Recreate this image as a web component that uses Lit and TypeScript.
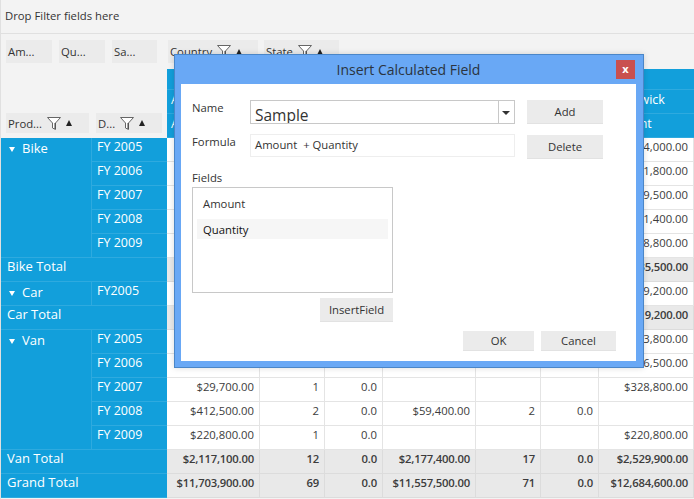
import { LitElement, html, css, svg } from 'lit'
import { customElement } from 'lit/decorators.js'

type Row = { kind: 'row' | 'total'; a?: string; span?: number; b?: string; vals: string[] }

const empty = ['', '', '', '', '', '']
const rows: Row[] = [
  { kind: 'row', a: 'Bike', span: 5, b: 'FY 2005', vals: [...empty, '$654,000.00'] },
  { kind: 'row', b: 'FY 2006', vals: [...empty, '$741,800.00'] },
  { kind: 'row', b: 'FY 2007', vals: [...empty, '$839,500.00'] },
  { kind: 'row', b: 'FY 2008', vals: [...empty, '$941,400.00'] },
  { kind: 'row', b: 'FY 2009', vals: [...empty, '$858,800.00'] },
  { kind: 'total', a: 'Bike Total', vals: [...empty, '$4,335,500.00'] },
  { kind: 'row', a: 'Car', span: 1, b: 'FY2005', vals: [...empty, '$5,819,200.00'] },
  { kind: 'total', a: 'Car Total', vals: [...empty, '$5,819,200.00'] },
  { kind: 'row', a: 'Van', span: 5, b: 'FY 2005', vals: [...empty, '$1,023,800.00'] },
  { kind: 'row', b: 'FY 2006', vals: [...empty, '$956,500.00'] },
  { kind: 'row', b: 'FY 2007', vals: ['$29,700.00', '1', '0.0', '', '', '', '$328,800.00'] },
  { kind: 'row', b: 'FY 2008', vals: ['$412,500.00', '2', '0.0', '$59,400.00', '2', '0.0', ''] },
  { kind: 'row', b: 'FY 2009', vals: ['$220,800.00', '1', '0.0', '', '', '', '$220,800.00'] },
  { kind: 'total', a: 'Van Total', vals: ['$2,117,100.00', '12', '0.0', '$2,177,400.00', '17', '0.0', '$2,529,900.00'] },
  { kind: 'total', a: 'Grand Total', vals: ['$11,703,900.00', '69', '0.0', '$11,557,500.00', '71', '0.0', '$12,684,600.00'] },
]

const filterIcon = svg`<svg class="ficon" width="14" height="13" viewBox="0 0 14 13"><path d="M.5.5h13L8.5 6v6.5L5.5 11V6z" fill="#fff" stroke="#666" stroke-width="1"/><path d="M8 6v6" stroke="#444"/></svg>`

@customElement('app-root')
export class AppRoot extends LitElement {
  static styles = css`
    :host {
      display: block;
      position: relative;
      width: 694px;
      height: 499px;
      overflow: hidden;
      box-sizing: border-box;
      background: #f3f3f3;
      border-left: 1px solid #e0e0e0;
      font-family: 'Open Sans', 'Noto Sans', sans-serif;
      font-size: 11.3px;
      color: #333;
    }
    .filter-bar {
      height: 34px;
      box-sizing: border-box;
      padding: 8px 0 0 4px;
      border-bottom: 1px solid #e0e0e0;
    }
    .chip-row {
      display: flex;
      height: 35px;
      padding: 6px 0 0 5px;
      box-sizing: border-box;
    }
    .chip {
      display: flex;
      align-items: center;
      height: 23px;
      box-sizing: border-box;
      padding-left: 2px;
      background: #ebebeb;
      white-space: nowrap;
    }
    .chip.short { height: 20px; }
    .ficon { margin-left: 5px; flex: none; }
    .tri {
      width: 0;
      height: 0;
      margin-left: 5px;
      border-left: 3.5px solid transparent;
      border-right: 3.5px solid transparent;
      border-bottom: 6px solid #222;
    }
    .pivot {
      display: grid;
      grid-template-columns: 91px 75px 93px 65px 58px 93px 65px 58px 95px;
    }
    .corner {
      grid-column: 1 / 3;
      height: 69px;
      box-sizing: border-box;
      display: flex;
      align-items: flex-end;
      padding: 0 0 5px 5px;
    }
    .col-head {
      grid-column: 3 / 10;
      height: 69px;
      background: #129fdb;
      color: #fff;
      display: grid;
      grid-template-rows: 21px 24px 24px;
      font-size: 12.5px;
    }
    .col-head > div {
      display: flex;
      border-bottom: 1px solid #2eaadf;
      line-height: 20px;
      white-space: nowrap;
    }
    .hc1 { width: 432px; padding-left: 4px; box-sizing: border-box; }
    .hc2 { padding-left: 6px; }
    .cell {
      height: 24px;
      box-sizing: border-box;
      padding: 0 5px;
      line-height: 17px;
      white-space: nowrap;
    }
    .head {
      background: #129fdb;
      color: #fff;
      border-bottom: 1px solid #2eaadf;
      border-right: 1px solid #2eaadf;
    }
    .head.span {
      grid-column: 1 / 3;
      border-right: 0;
      padding-left: 6px;
      font-size: 13px;
    }
    .head.group {
      height: auto;
      display: flex;
      align-items: flex-start;
      padding: 2px 0 0 8px;
      font-size: 13px;
    }
    .arrow {
      width: 0;
      height: 0;
      margin: 7px 7px 0 0;
      border-left: 3px solid transparent;
      border-right: 3px solid transparent;
      border-top: 5px solid #fff;
    }
    .head.year {
      border-right: 0;
      padding-left: 5px;
      font-size: 12.5px;
      line-height: 18px;
    }
    .val {
      text-align: right;
      background: #fff;
      border-bottom: 1px solid #e4e4e4;
      border-right: 1px solid #e4e4e4;
      color: #3c3c3c;
    }
    .val.total {
      background: #e9e9e9;
      font-weight: 600;
      letter-spacing: -0.2px;
      border-color: #dcdcdc;
    }
    .dialog {
      position: absolute;
      left: 173px;
      top: 54px;
      width: 470px;
      height: 314px;
      box-sizing: border-box;
      background: #69a8f5;
      border: 1px solid #4a86c8;
      box-shadow: 0 0 6px rgba(0, 0, 0, 0.15);
      display: flex;
      flex-direction: column;
      padding: 0 7px 6px 6px;
    }
    .title-bar {
      height: 29px;
      position: relative;
      flex: none;
    }
    .title {
      text-align: center;
      font-size: 14px;
      line-height: 30px;
      color: #2b3440;
    }
    .close {
      position: absolute;
      right: 1px;
      top: 5px;
      width: 19px;
      height: 19px;
      background: #c9504f;
      color: #fff;
      font-weight: 700;
      font-size: 11px;
      line-height: 17px;
      text-align: center;
    }
    .body {
      flex: 1;
      background: #fff;
      padding: 16px 20px 0 11px;
      display: flex;
      flex-direction: column;
      min-height: 0;
    }
    .form-row { display: flex; }
    .label { width: 58px; flex: none; }
    .combo {
      width: 265px;
      height: 24px;
      box-sizing: border-box;
      border: 1px solid #c8c8c8;
      display: flex;
      font-size: 15.5px;
      line-height: 28px;
      padding-left: 4px;
      overflow: hidden;
    }
    .combo span { flex: 1; }
    .combo i {
      width: 15px;
      border-left: 1px solid #c8c8c8;
      position: relative;
    }
    .combo i::after {
      content: '';
      position: absolute;
      left: 3px;
      top: 10px;
      border-left: 4px solid transparent;
      border-right: 4px solid transparent;
      border-top: 4px solid #333;
    }
    .formula {
      width: 265px;
      height: 23px;
      box-sizing: border-box;
      border: 1px solid #eeeeee;
      padding-left: 4px;
      line-height: 20px;
    }
    .btn {
      height: 24px;
      box-sizing: border-box;
      background: #ebebeb;
      border-bottom: 1px solid #e2e2e2;
      text-align: center;
      line-height: 23px;
    }
    .side { width: 76px; margin-left: 12px; }
    .side.low { margin-top: 1px; }
    .fields-label { margin-top: 11px; line-height: 16px; }
    .list {
      width: 201px;
      height: 106px;
      box-sizing: border-box;
      border: 1px solid #c8c8c8;
      margin-top: 1px;
      padding: 6px 4px 0;
    }
    .item { height: 20px; line-height: 20px; padding-left: 6px; }
    .item + .item { margin-top: 5px; }
    .item.sel { background: #f6f6f6; color: #111; line-height: 22px; }
    .insert { width: 73px; margin: 5px 0 0 128px; }
    .actions {
      display: flex;
      justify-content: flex-end;
      gap: 7px;
      margin-top: 9px;
    }
    .actions .btn { height: 20px; line-height: 20px; }
  `

  render() {
    return html`
      <div class="filter-bar">Drop Filter fields here</div>
      <div class="chip-row">
        <div class="chip" style="width:46px">Am...</div>
        <div class="chip" style="width:46px;margin-left:7px">Qu...</div>
        <div class="chip" style="width:45px;margin-left:7px">Sa...</div>
        <div class="chip" style="width:90px;margin-left:11px">Country ${filterIcon}<span class="tri"></span></div>
        <div class="chip" style="width:75px;margin-left:6px">State ${filterIcon}<span class="tri"></span></div>
      </div>
      <div class="pivot">
        <div class="corner">
          <div class="chip short" style="width:83px">Prod... ${filterIcon}<span class="tri"></span></div>
          <div class="chip short" style="width:66px;margin-left:7px">D... ${filterIcon}<span class="tri"></span></div>
        </div>
        <div class="col-head">
          <div></div>
          <div><span class="hc1">Alberta</span><span class="hc2">Brunswick</span></div>
          <div><span class="hc1">Amount</span><span class="hc2">Amount</span></div>
        </div>
        ${rows.map((r) => this.renderRow(r))}
      </div>
      ${this.renderDialog()}
    `
  }

  private renderRow(r: Row) {
    const total = r.kind === 'total'
    return html`
      ${total
        ? html`<div class="cell head span">${r.a}</div>`
        : html`
            ${r.a
              ? html`<div class="cell head group" style="grid-row: span ${r.span}"><span class="arrow"></span>${r.a}</div>`
              : ''}
            <div class="cell head year" style="grid-column: 2">${r.b}</div>
          `}
      ${r.vals.map((v, i) => html`<div class="cell val ${total ? 'total' : ''}" style="grid-column: ${i + 3}">${v}</div>`)}
    `
  }

  private renderDialog() {
    return html`
      <div class="dialog">
        <div class="title-bar">
          <div class="title">Insert Calculated Field</div>
          <div class="close">x</div>
        </div>
        <div class="body">
          <div class="form-row">
            <div class="label">Name</div>
            <div class="combo"><span>Sample</span><i></i></div>
            <div class="btn side">Add</div>
          </div>
          <div class="form-row" style="margin-top:10px">
            <div class="label">Formula</div>
            <div class="formula">Amount&nbsp; + Quantity</div>
            <div class="btn side low">Delete</div>
          </div>
          <div class="fields-label">Fields</div>
          <div class="list">
            <div class="item">Amount</div>
            <div class="item sel">Quantity</div>
          </div>
          <div class="btn insert">InsertField</div>
          <div class="actions">
            <div class="btn" style="width:71px">OK</div>
            <div class="btn" style="width:75px">Cancel</div>
          </div>
        </div>
      </div>
    `
  }
}
